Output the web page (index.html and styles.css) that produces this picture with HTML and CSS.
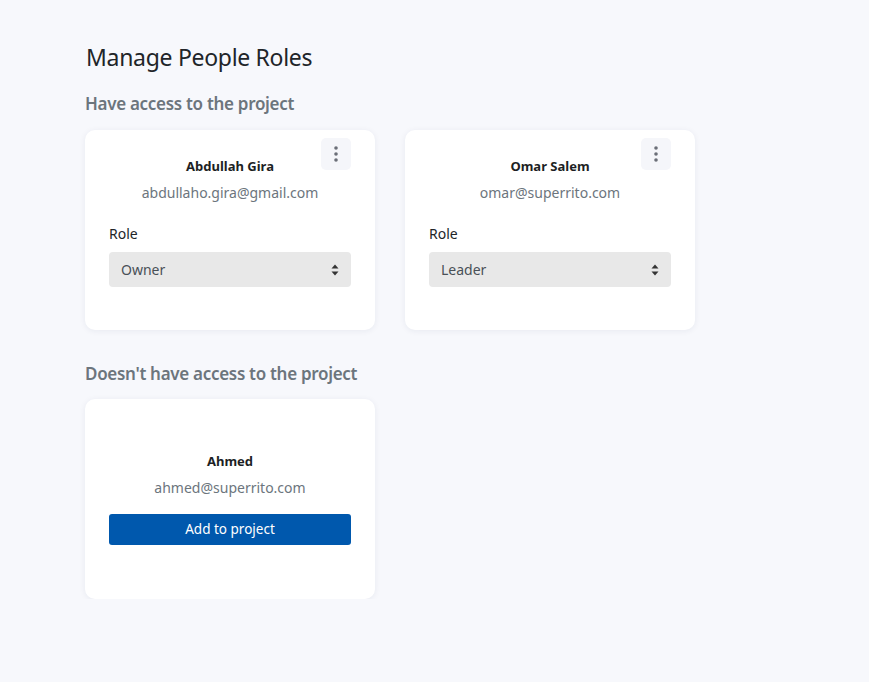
FILE: index.html
```html
<!DOCTYPE html>
<html>
<head>
<meta charset="utf-8">
<link rel="stylesheet" href="styles.css">
</head>
<body>
<main class="page">
  <h1 class="title">Manage People Roles</h1>

  <h2 class="section">Have access to the project</h2>
  <div class="grid">
    <div class="card">
      <button class="kebab" aria-label="More">
        <svg width="4" height="16" viewBox="0 0 4 16"><circle cx="2" cy="2" r="1.8"/><circle cx="2" cy="8" r="1.8"/><circle cx="2" cy="14" r="1.8"/></svg>
      </button>
      <div class="name">Abdullah Gira</div>
      <div class="email">abdullaho.gira@gmail.com</div>
      <label class="label">Role</label>
      <div class="select">
        <span>Owner</span>
        <svg width="8" height="12" viewBox="0 0 8 12"><path d="M4 0.5 L7.5 4.5 H0.5 Z M4 11.5 L7.5 7.5 H0.5 Z"/></svg>
      </div>
    </div>
    <div class="card">
      <button class="kebab" aria-label="More">
        <svg width="4" height="16" viewBox="0 0 4 16"><circle cx="2" cy="2" r="1.8"/><circle cx="2" cy="8" r="1.8"/><circle cx="2" cy="14" r="1.8"/></svg>
      </button>
      <div class="name">Omar Salem</div>
      <div class="email">omar@superrito.com</div>
      <label class="label">Role</label>
      <div class="select">
        <span>Leader</span>
        <svg width="8" height="12" viewBox="0 0 8 12"><path d="M4 0.5 L7.5 4.5 H0.5 Z M4 11.5 L7.5 7.5 H0.5 Z"/></svg>
      </div>
    </div>
  </div>

  <h2 class="section second">Doesn't have access to the project</h2>
  <div class="grid">
    <div class="card centered">
      <div class="name">Ahmed</div>
      <div class="email">ahmed@superrito.com</div>
      <button class="add">Add to project</button>
    </div>
  </div>
</main>
</body>
</html>
```

FILE: styles.css
```css
* { box-sizing: border-box; }
html, body {
  margin: 0;
  background: #f7f8fc;
  font-family: "Noto Sans", "Open Sans", sans-serif;
  color: #212529;
}
.page {
  padding: 43px 0 0 85px;
}
.title {
  margin: 0 0 0 1px;
  font-size: 23px;
  letter-spacing: -0.3px;
  font-weight: 400;
  line-height: 28px;
  color: #212529;
}
.section {
  margin: 22px 0 15px 0;
  font-size: 17px;
  letter-spacing: -0.3px;
  font-weight: 600;
  line-height: 22px;
  color: #6c757d;
}
.section.second {
  margin-top: 33px;
  margin-bottom: 14px;
}
.grid {
  display: flex;
  gap: 30px;
}
.card {
  position: relative;
  width: 290px;
  height: 200px;
  background: #fff;
  border-radius: 10px;
  box-shadow: 0 1px 6px rgba(30, 40, 80, 0.07);
  padding: 27px 24px 0 24px;
  display: flex;
  flex-direction: column;
}
.card.centered {
  justify-content: center;
  padding-top: 0;
  padding-bottom: 2px;
}
.kebab {
  position: absolute;
  top: 8px;
  right: 24px;
  width: 30px;
  height: 32px;
  border: none;
  border-radius: 5px;
  background: #f5f6fa;
  display: flex;
  align-items: center;
  justify-content: center;
  padding: 0;
}
.kebab svg { fill: #6b6f78; }
.name {
  text-align: center;
  font-size: 13px;
  font-weight: 700;
  line-height: 18px;
  color: #1d1f24;
}
.email {
  margin-top: 8px;
  text-align: center;
  font-size: 14px;
  line-height: 20px;
  color: #6c757d;
}
.label {
  margin-top: 21px;
  font-size: 14px;
  line-height: 20px;
  color: #212529;
}
.select {
  margin-top: 8px;
  height: 35px;
  background: #e8e8e8;
  border-radius: 4px;
  display: flex;
  align-items: center;
  justify-content: space-between;
  padding: 0 12px;
  font-size: 14px;
  color: #495057;
}
.select svg { fill: #333; }
.add {
  margin-top: 16px;
  height: 31px;
  width: 100%;
  border: none;
  border-radius: 3px;
  background: #0058ad;
  color: #fff;
  font-family: inherit;
  font-size: 13.5px;
}
```
